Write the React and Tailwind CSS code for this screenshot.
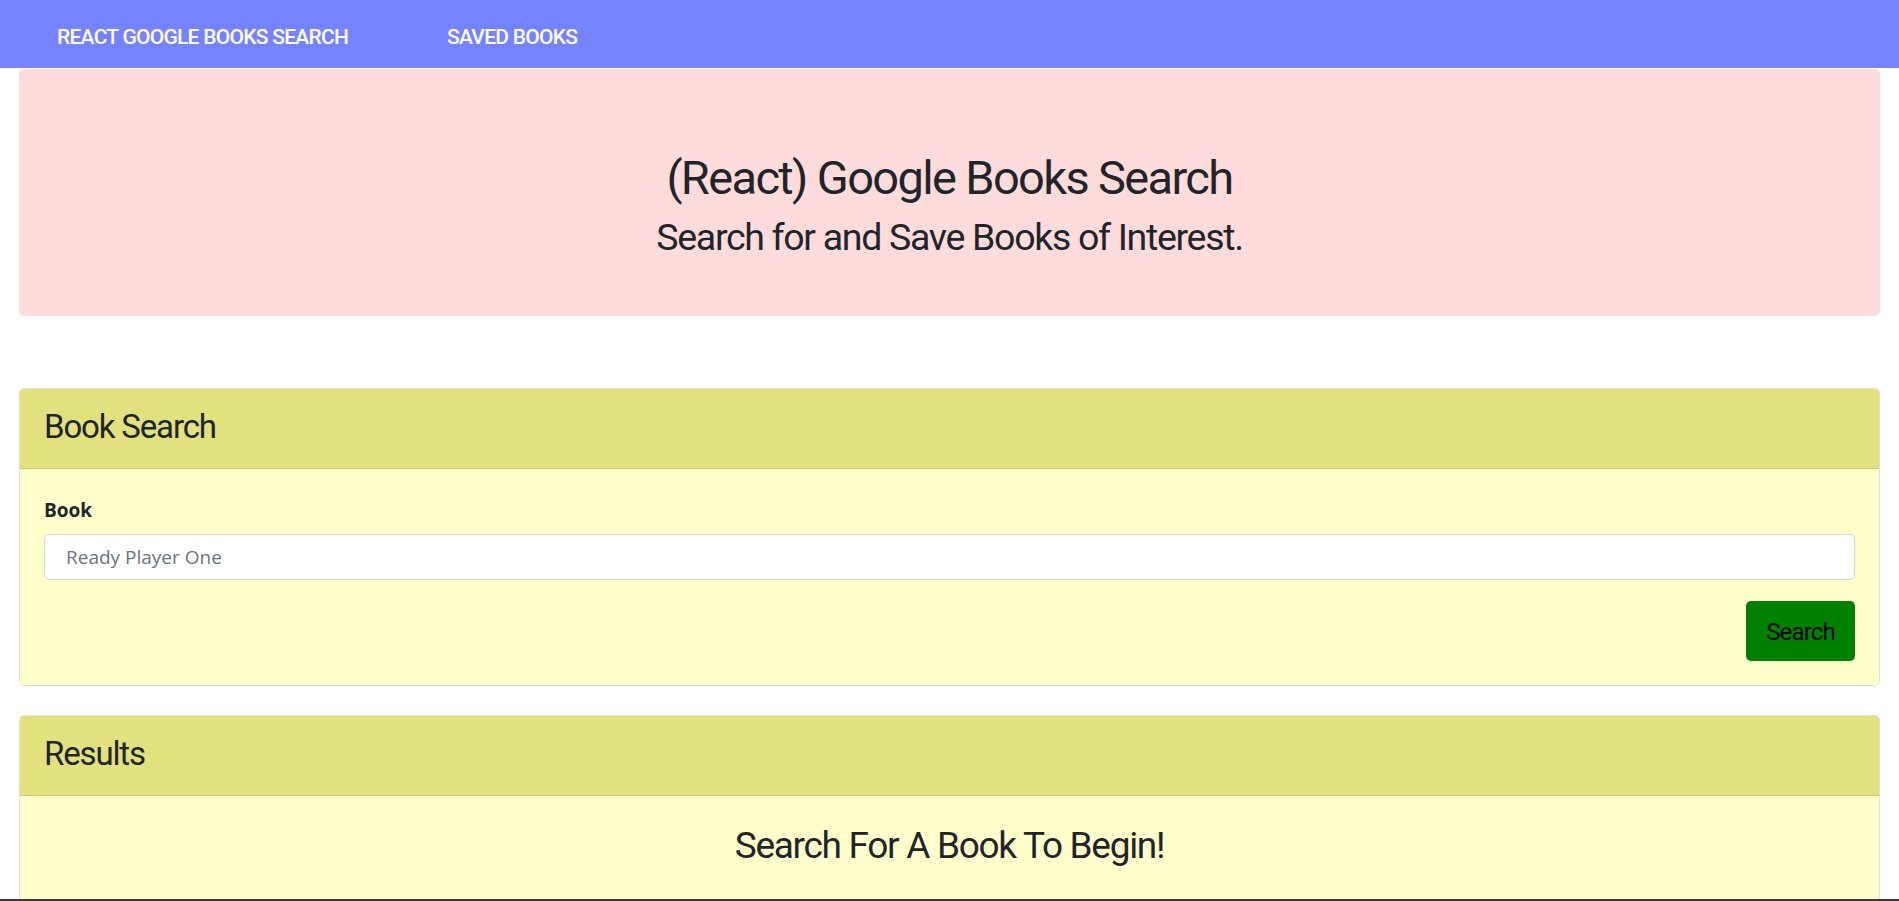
import React from "react";

const narrow = "font-['Roboto','Liberation_Sans',sans-serif] tracking-[-0.035em]";

function Card({ title, children }) {
  return (
    <div className="border border-[#dfdfdf] rounded-[5px] overflow-hidden">
      <div className="h-[80px] bg-[#e1e17d] border-b border-[#c8c86f] px-[24px] pt-[16px]">
        <h3 className={`${narrow} text-[33px] leading-[43px] text-[#212529]`}>{title}</h3>
      </div>
      {children}
    </div>
  );
}

export default function App() {
  return (
    <div className="min-h-screen bg-white text-[#212529]">
      <nav className="h-[68px] bg-[#7683ff] flex items-center pt-[6px] pl-[57px]">
        <a className={`${narrow} font-medium w-[390px] text-white text-[21px] leading-none uppercase`}>
          React Google Books Search
        </a>
        <a className={`${narrow} font-medium text-white text-[21px] leading-none uppercase`}>Saved Books</a>
      </nav>

      <div className="px-[19px] pt-px">
        <div className="rounded-[5px] bg-[#ffdcdc] pt-[78px] pb-[54px] text-center">
          <h1 className={`${narrow} text-[47px] leading-[62px] text-[#212529]`}>
            (React) Google Books Search
          </h1>
          <h3 className={`${narrow} text-[37.5px] leading-[49px] mt-[4px] text-[#212529]`}>
            Search for and Save Books of Interest.
          </h3>
        </div>

        <div className="mt-[72px]">
          <Card title="Book Search">
            <div className="bg-[#ffffcc] p-[24px]">
              <label className="block pt-[3px] font-['Open_Sans',sans-serif] font-bold text-[19px] leading-[29px]">
                Book
              </label>
              <input
                className="mt-[9px] block w-full h-[46px] border border-[#ced4da] rounded-[5px] bg-white px-[21px] font-['Open_Sans',sans-serif] text-[19px] text-[#495057] placeholder:text-[#6c757d] outline-none"
                placeholder="Ready Player One"
              />
              <div className="flex justify-end mt-[21px]">
                <button
                  className={`${narrow} w-[109px] h-[60px] pt-px bg-[#008000] rounded-[5px] text-[24px] text-black`}
                >
                  Search
                </button>
              </div>
            </div>
          </Card>
        </div>

        <div className="mt-[29px]">
          <Card title="Results">
            <div className="bg-[#ffffcc] pt-[25px] pb-[40px] text-center">
              <h3 className={`${narrow} text-[37px] leading-[49px] text-[#212529]`}>
                Search For A Book To Begin!
              </h3>
            </div>
          </Card>
        </div>
      </div>
      <div className="fixed left-0 right-0 bottom-0 h-[2px] bg-[#3a3a3a]" />
    </div>
  );
}
